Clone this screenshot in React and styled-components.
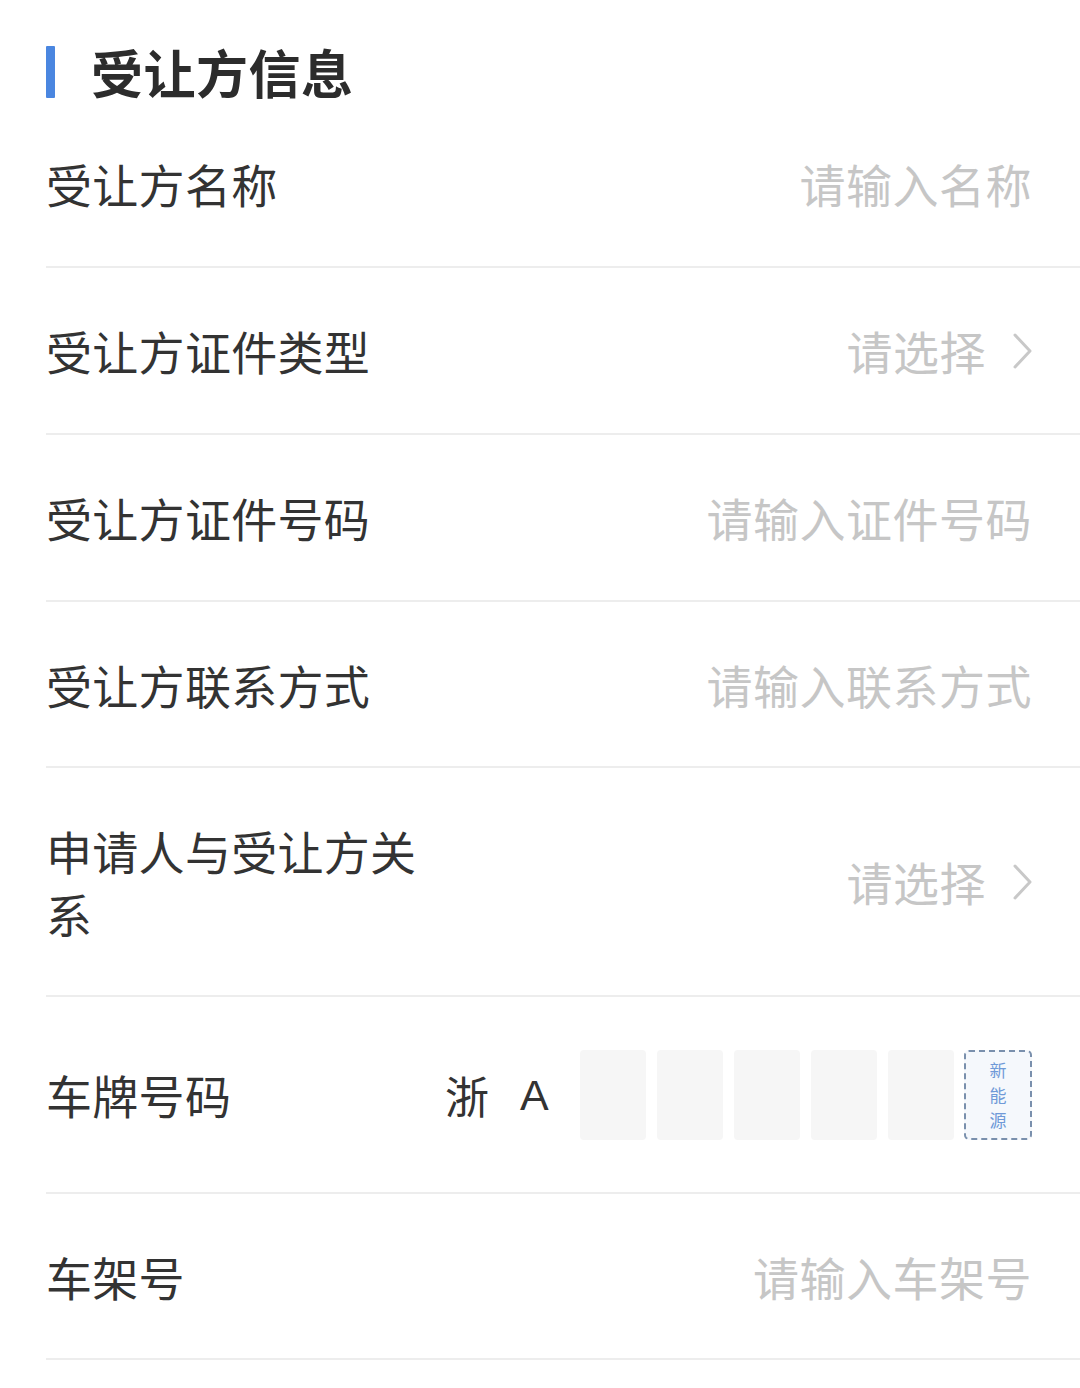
import React from "react";
import styled, { createGlobalStyle } from "styled-components";

const GlobalStyle = createGlobalStyle`
  *, *::before, *::after {
    box-sizing: border-box;
  }
  html, body {
    margin: 0;
    padding: 0;
    background: #fff;
  }
  body {
    font-family: "Noto Sans CJK SC", "Noto Sans", sans-serif;
    color: #333;
  }
`

const Page = styled.div`
  width: 1080px;
  min-height: 1388px;
  background: #fff;
  padding-left: 46px;
`

const Header = styled.div`
  display: flex;
  align-items: center;
  padding: 46px 0 3px;
`

const Bar = styled.div`
  width: 9px;
  height: 52px;
  background: #4a86e0;
  border-radius: 1px;
`

const Title = styled.div`
  margin-left: 36px;
  font-size: 52px;
  font-weight: 700;
  line-height: 52px;
  color: #2c2c2c;
  letter-spacing: 0.5px;
`

const Row = styled.div`
  display: flex;
  align-items: center;
  justify-content: space-between;
  min-height: ${({h}) => h || 167}px;
  padding-right: 48px;
  border-bottom: 2px solid #ededed;
`

const Label = styled.div`
  width: ${({w}) => w || 380}px;
  flex-shrink: 0;
  font-size: 46px;
  line-height: 63px;
  letter-spacing: 0.3px;
  color: #333;
`

const Placeholder = styled.div`
  font-size: 46px;
  line-height: 63px;
  color: #c6c6c6;
  letter-spacing: 0.5px;
`

const Select = styled.div`
  display: flex;
  align-items: center;
  gap: 26px;
`

const Chevron = () => (
  <svg width="20" height="38" viewBox="0 0 20 38">
    <path d="M3 3 L18 19 L3 35" fill="none" stroke="#c8c8c8" strokeWidth="3" strokeLinecap="round" strokeLinejoin="round"/>
  </svg>
)

const Plate = styled.div`
  display: flex;
  align-items: center;
  flex: 1;
`

const Province = styled.div`
  font-size: 44px;
  line-height: 90px;
  color: #333;
  width: 75px;
`

const Letter = styled.div`
  font-size: 43px;
  line-height: 90px;
  color: #333;
  font-family: "Liberation Sans", "Noto Sans", sans-serif;
`

const Cells = styled.div`
  display: flex;
  gap: 11px;
  margin-left: auto;
`

const Cell = styled.div`
  width: 66px;
  height: 90px;
  border-radius: 4px;
  background: #f6f6f6;
`

const NewEnergy = styled.div`
  width: 68px;
  height: 90px;
  margin-left: -1px;
  border: 2px dashed #7a90ad;
  border-radius: 5px;
  background: #f5f8fc;
  display: flex;
  flex-direction: column;
  align-items: center;
  justify-content: center;
  font-size: 17px;
  line-height: 25px;
  color: #6f9ad8;
`

const fields = [
  { label: "受让方名称", placeholder: "请输入名称" },
  { label: "受让方证件类型", select: true },
  { label: "受让方证件号码", placeholder: "请输入证件号码" },
  { label: "受让方联系方式", placeholder: "请输入联系方式" },
]

const App = () => {
  return (
    <Page>
      <GlobalStyle/>
      <Header>
        <Bar/>
        <Title>受让方信息</Title>
      </Header>
      {fields.map((f, i) => (
        <Row key={f.label} h={i === 3 ? 166 : 167}>
          <Label>{f.label}</Label>
          {f.select ? (
            <Select>
              <Placeholder>请选择</Placeholder>
              <Chevron/>
            </Select>
          ) : (
            <Placeholder>{f.placeholder}</Placeholder>
          )}
        </Row>
      ))}
      <Row h={229}>
        <Label>申请人与受让方关系</Label>
        <Select>
          <Placeholder>请选择</Placeholder>
          <Chevron/>
        </Select>
      </Row>
      <Row h={197}>
        <Label w={399}>车牌号码</Label>
        <Plate>
          <Province>浙</Province>
          <Letter>A</Letter>
          <Cells>
            <Cell/>
            <Cell/>
            <Cell/>
            <Cell/>
            <Cell/>
            <NewEnergy>
              <span>新</span>
              <span>能</span>
              <span>源</span>
            </NewEnergy>
          </Cells>
        </Plate>
      </Row>
      <Row h={166}>
        <Label>车架号</Label>
        <Placeholder>请输入车架号</Placeholder>
      </Row>
    </Page>
  )
}

export default App
